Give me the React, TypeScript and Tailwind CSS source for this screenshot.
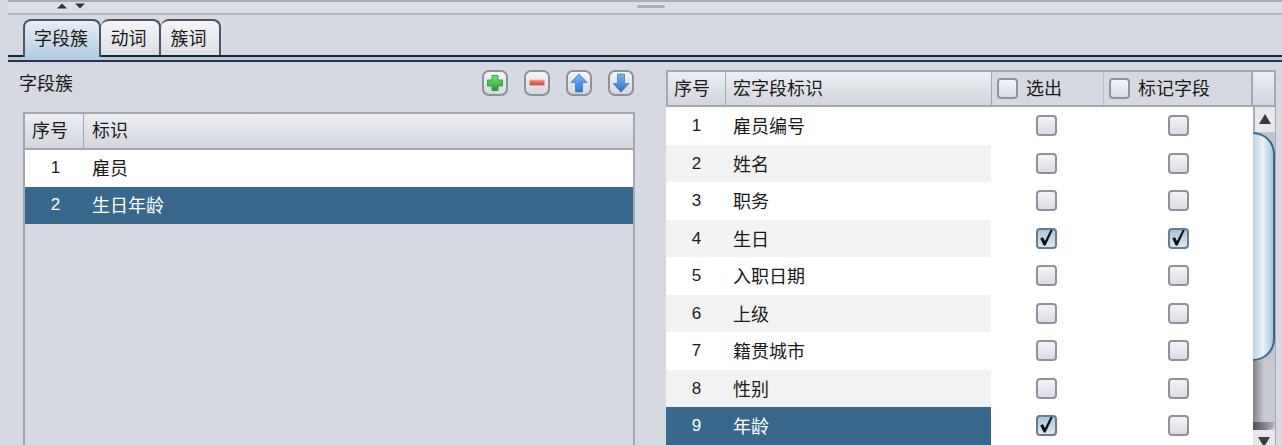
const font = { fontFamily: '"Noto Sans CJK SC", "Liberation Sans", sans-serif' };
const digit = { fontFamily: '"Liberation Sans", sans-serif', fontSize: 17 };

const rightRows = [
  { id: 1, name: '雇员编号', out: false, mark: false },
  { id: 2, name: '姓名', out: false, mark: false },
  { id: 3, name: '职务', out: false, mark: false },
  { id: 4, name: '生日', out: true, mark: true },
  { id: 5, name: '入职日期', out: false, mark: false },
  { id: 6, name: '上级', out: false, mark: false },
  { id: 7, name: '籍贯城市', out: false, mark: false },
  { id: 8, name: '性别', out: false, mark: false },
  { id: 9, name: '年龄', out: true, mark: false },
];

function Checkbox({ checked = false }: { checked?: boolean }) {
  return (
    <div
      className={`relative w-[21px] h-[21px] rounded-[4px] border-2 ${
        checked
          ? 'border-[#64808f] bg-gradient-to-b from-[#a9c5da] to-[#dde6ee]'
          : 'border-[#8f9298] bg-gradient-to-b from-[#f3f4f7] to-[#d9dce4]'
      }`}
    >
      {checked && (
        <svg viewBox="0 0 21 21" className="absolute -left-[2px] -top-[2px] w-[21px] h-[21px]">
          <path d="M4.2 10.2 L7 9.2 L9 13 L14.5 2 L16.8 2 L9.6 17.6 L7.6 17.6 Z" fill="#111" />
        </svg>
      )}
    </div>
  );
}

function IconButton({ children }: { children: React.ReactNode }) {
  return (
    <button className="w-[26px] h-[26px] rounded-[7px] border-2 border-[#8e9196] bg-gradient-to-b from-[#f4f5f8] to-[#d3d6de] flex items-center justify-center">
      {children}
    </button>
  );
}

function HeaderCell({ className = '', children }: { className?: string; children?: React.ReactNode }) {
  return <div className={`flex items-center h-full border-r border-[#a4a8b0] ${className}`}>{children}</div>;
}

export default function App() {
  return (
    <div className="w-[1282px] h-[445px] overflow-hidden bg-[#d6d9e2] text-[18px] text-[#1a1a1a] flex flex-col" style={font}>
      {/* split pane handle */}
      <div className="ml-2 h-[15px] shrink-0 border-t-2 border-b-2 border-t-[#a9adb5] border-b-[#b4b7bf] bg-[#dcdfe6] relative">
        <svg viewBox="0 0 28 6" className="absolute left-[49px] top-[1px] w-[28px] h-[6px]">
          <path d="M0 5.5 L5 0.5 L10 5.5 Z" fill="#333" />
          <path d="M18 0.5 L28 0.5 L23 5.5 Z" fill="#333" />
        </svg>
        <div className="absolute left-[629px] top-[3px] w-[28px] h-[3px] bg-[#a9adb5] rounded-sm" />
      </div>

      {/* tabs */}
      <div className="ml-2 mt-[4px] h-[38px] shrink-0 flex items-end pl-[15px] border-b-2 border-[#1b2533]">
        <div className="w-[78px] h-[38px] -mb-[2px] rounded-t-[8px] border-2 border-b-0 border-[#45566a] bg-gradient-to-b from-[#e8edf3] to-[#b4cde2] flex items-center justify-center pb-[3px] pr-[2px] relative z-10">字段簇</div>
        <div className="w-[60px] h-[36px] rounded-t-[8px] border-2 border-b-0 border-l-0 border-[#4f5560] bg-gradient-to-b from-[#f5f5f7] to-[#dcdee5] flex items-center justify-center pb-[2px] pr-[3px]">动词</div>
        <div className="w-[60px] h-[36px] rounded-t-[8px] border-2 border-b-0 border-l-0 border-[#4f5560] bg-gradient-to-b from-[#f5f5f7] to-[#dcdee5] flex items-center justify-center pb-[2px] pr-[3px]">簇词</div>
      </div>
      <div className="ml-2 h-[5px] shrink-0 border-b-2 border-b-[#27344a] bg-[#b4cde2]" />

      <div className="flex flex-1 min-h-0">
        {/* left panel */}
        <div className="w-[666px] shrink-0 pl-[23px] pr-[31px] flex flex-col">
          <div className="h-[50px] shrink-0 flex items-center">
            <span className="-ml-1 mb-[10px]">字段簇</span>
            <div className="ml-auto mr-[1px] mb-[8px] flex gap-4">
              <IconButton>
                <svg viewBox="0 0 18 18" className="w-[18px] h-[18px]">
                  <defs>
                    <linearGradient id="g" x1="0" y1="0" x2="0" y2="1">
                      <stop offset="0" stopColor="#7be07b" />
                      <stop offset="1" stopColor="#1f9f2f" />
                    </linearGradient>
                  </defs>
                  <path d="M6 1.5h6v4.5h4.5v6H12v4.5H6V12H1.5V6H6z" fill="url(#g)" stroke="#2e8f3e" strokeWidth="0.8" />
                </svg>
              </IconButton>
              <IconButton>
                <svg viewBox="0 0 18 18" className="w-[18px] h-[18px]">
                  <defs>
                    <linearGradient id="r" x1="0" y1="0" x2="0" y2="1">
                      <stop offset="0" stopColor="#ee8a82" />
                      <stop offset="1" stopColor="#d9413c" />
                    </linearGradient>
                  </defs>
                  <rect x="1.5" y="6" width="15" height="5.5" rx="1" fill="url(#r)" stroke="#e6a8a4" strokeWidth="0.8" />
                </svg>
              </IconButton>
              <IconButton>
                <svg viewBox="0 0 18 20" className="w-[18px] h-[20px]">
                  <defs>
                    <linearGradient id="bu" x1="0" y1="0" x2="0" y2="1">
                      <stop offset="0" stopColor="#86b8f0" />
                      <stop offset="1" stopColor="#2f76d6" />
                    </linearGradient>
                  </defs>
                  <path d="M9 0.8 L17 9.5 H12.5 V19 H5.5 V9.5 H1 Z" fill="url(#bu)" stroke="#3f74bd" strokeWidth="0.7" />
                </svg>
              </IconButton>
              <IconButton>
                <svg viewBox="0 0 18 20" className="w-[18px] h-[20px]">
                  <defs>
                    <linearGradient id="bd" x1="0" y1="0" x2="0" y2="1">
                      <stop offset="0" stopColor="#7eb0ec" />
                      <stop offset="1" stopColor="#2f6fd0" />
                    </linearGradient>
                  </defs>
                  <path d="M9 19.2 L17 10.5 H12.5 V1 H5.5 V10.5 H1 Z" fill="url(#bd)" stroke="#3f74bd" strokeWidth="0.7" />
                </svg>
              </IconButton>
            </div>
          </div>
          <div className="flex-1 border-2 border-b-0 border-[#a4a8b0] bg-[#d6d9e2] flex flex-col">
            <div className="h-[36px] shrink-0 flex border-b-2 border-[#a4a8b0] bg-gradient-to-b from-[#eceef2] to-[#d3d6de]">
              <HeaderCell className="w-[59px] pl-[7px] pb-[3px]">序号</HeaderCell>
              <div className="flex items-center pl-[8px] pb-[3px]">标识</div>
            </div>
            <div className="h-[37px] bg-white flex items-center pb-[2px]">
              <span className="w-[61px] text-center" style={digit}>1</span>
              <span className="pl-[6px]">雇员</span>
            </div>
            <div className="h-[37px] bg-[#38698c] text-white flex items-center pb-[2px]">
              <span className="w-[61px] text-center" style={digit}>2</span>
              <span className="pl-[6px]">生日年龄</span>
            </div>
          </div>
        </div>

        {/* right panel */}
        <div className="flex-1 min-w-0 pt-[8px] pr-[6px]">
          <div className="h-[37px] flex border-2 border-[#a4a8b0] bg-gradient-to-b from-[#eceef2] to-[#d3d6de]">
            <HeaderCell className="w-[58px] pl-[6px] pb-[2px]">序号</HeaderCell>
            <HeaderCell className="w-[266px] pl-[7px] pb-[2px]">宏字段标识</HeaderCell>
            <div className="w-[112px] h-full flex items-center pl-[5px] gap-[8px] bg-[#d6d9e2] border-r border-[#b4c0cf]">
              <Checkbox />
              <span className="pb-[2px]">选出</span>
            </div>
            <div className="w-[149px] h-full flex items-center pl-[5px] gap-[8px] bg-[#d6d9e2] border-r-2 border-[#a4a8b0]">
              <Checkbox />
              <span className="pb-[2px]">标记字段</span>
            </div>
          </div>
          <div className="flex">
            <div className="w-[587px] bg-white flex flex-col">
              {rightRows.map((r) => {
                const left =
                  r.id === 9 ? 'bg-[#38698c] text-white' : r.id % 2 === 0 ? 'bg-[#f2f2f2]' : 'bg-white';
                return (
                  <div key={r.id} className="h-[37.5px] shrink-0 flex items-center">
                    <div className={`w-[325px] h-full flex items-center ${left}`}>
                      <span className="w-[61px] text-center" style={digit}>{r.id}</span>
                      <span className="pl-[6px]">{r.name}</span>
                    </div>
                    <div className="w-[112px] pr-[2px] flex justify-center">
                      <Checkbox checked={r.out} />
                    </div>
                    <div className="w-[150px] flex justify-center">
                      <Checkbox checked={r.mark} />
                    </div>
                  </div>
                );
              })}
            </div>
            {/* scrollbar */}
            <div className="w-[23px] h-[338px] overflow-hidden flex flex-col bg-[#c3c6cd] border-r border-[#a4a8b0]">
              <div className="h-[25px] shrink-0 bg-[#e6e8ed] border-l-2 border-[#a9abb0] flex justify-center pt-[7px]">
                <div className="w-0 h-0 border-l-[6px] border-r-[6px] border-b-[10px] border-l-transparent border-r-transparent border-b-[#3a3a3a]" />
              </div>
              <div className="h-[229px] shrink-0 rounded-r-[22px] border-2 border-l-0 border-[#38668c] bg-gradient-to-r from-[#bcd3e6] via-[#e8f0f6] to-[#a9c9e2]" />
              <div className="h-[69px] shrink-0 bg-gradient-to-r from-[#808286] via-[#c8cad0] to-[#c9cbd2] relative">
                <div className="absolute inset-x-0 bottom-0 h-[8px] rounded-br-[12px] bg-gradient-to-r from-[#4e5055] to-[#b4b6bc]" />
              </div>
              <div className="h-[25px] shrink-0 bg-[#e6e8ed] flex justify-center pt-[7px]">
                <div className="w-0 h-0 border-l-[6px] border-r-[6px] border-t-[10px] border-l-transparent border-r-transparent border-t-[#3a3a3a]" />
              </div>
            </div>
          </div>
        </div>
      </div>
    </div>
  );
}
